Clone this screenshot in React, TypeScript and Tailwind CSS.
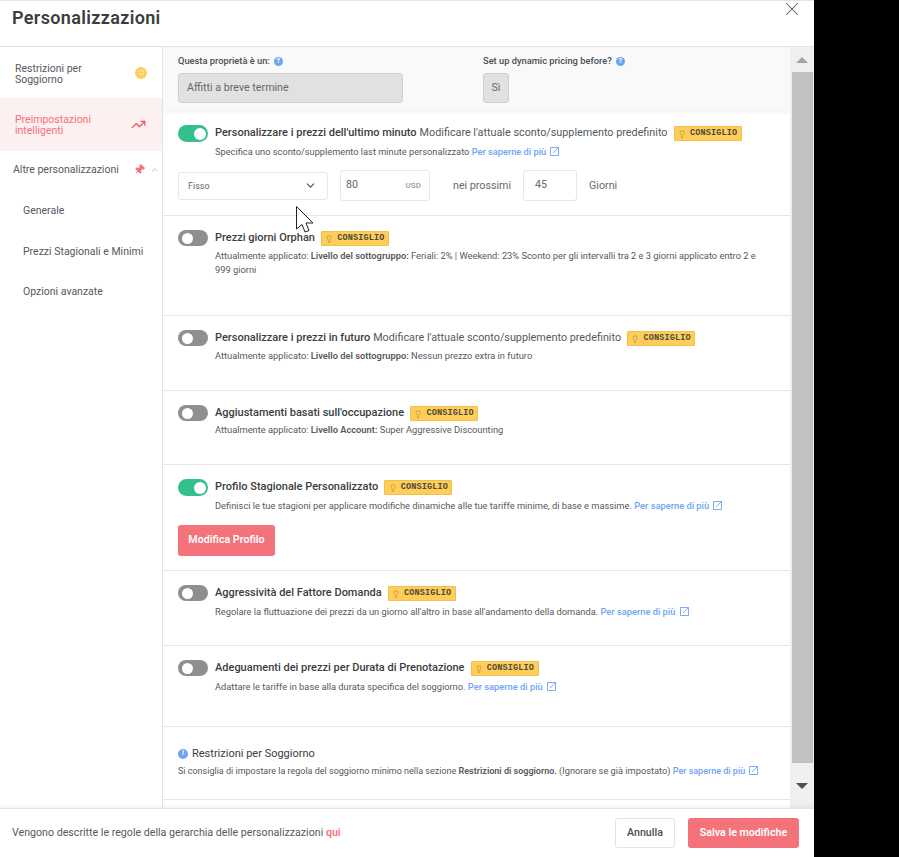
import React from 'react';
import { ChevronDown, ChevronUp, X, Lightbulb, TrendingUp, Pin } from 'lucide-react';

const font = { fontFamily: 'Roboto, sans-serif' };

function Toggle({ on }: { on?: boolean }) {
  return on ? (
    <div className="flex h-[17px] w-[30px] shrink-0 items-center justify-end rounded-full bg-[#33c08d] pr-[2px]">
      <div className="h-[12px] w-[12px] rounded-full bg-white" />
    </div>
  ) : (
    <div className="flex h-[16px] w-[30px] shrink-0 items-center rounded-full bg-[#8f8f8f] pl-[4px]">
      <div className="h-[11px] w-[11px] rounded-full bg-white" />
    </div>
  );
}

function Tip() {
  return (
    <span className="ml-[3px] inline-flex h-[15px] w-[68px] shrink-0 items-center justify-center gap-[4px] rounded-[1px] border border-[#f0c04e] bg-[#ffce5a] font-['Liberation_Mono'] text-[8.5px] font-bold leading-none tracking-[0.15px] text-[#4a4a3a]">
      <Lightbulb size={8} strokeWidth={1.3} className="text-[#7a6a30]" />
      CONSIGLIO
    </span>
  );
}

function LinkIcon() {
  return (
    <svg width="9" height="9" viewBox="0 0 9 9" fill="none" stroke="currentColor" strokeWidth="0.9" className="ml-[2px] inline align-[-1px]">
      <path d="M6 .5H.5v8h8V3" />
      <path d="M3 6L8.5.5M6 .5h2.5V3" />
    </svg>
  );
}

function More() {
  return (
    <span className="whitespace-nowrap font-medium text-[#6ea4f5]">
      {' '}Per saperne di più{' '}
      <LinkIcon />
    </span>
  );
}

function Title({ title, extra }: { title: string; extra?: string }) {
  return (
    <div className="flex h-[17px] items-center gap-[3px] whitespace-nowrap text-[10.8px] text-[#55595c]">
      <span className="text-[11px] font-medium text-[#3a3d40]">{title}</span>
      {extra && <span>{extra}</span>}
      <Tip />
    </div>
  );
}

function Row({ on, title, extra, h, sub = 'mt-[2px]', children }: { on?: boolean; title: string; extra?: string; h: string; sub?: string; children?: React.ReactNode }) {
  return (
    <div className={`border-b border-[#e6e6e6] px-[15px] pt-[14px] ${h}`}>
      <div className="flex items-start gap-[7px]">
        <Toggle on={on} />
        <div className="min-w-0 flex-1">
          <Title title={title} extra={extra} />
          <div className={`whitespace-nowrap text-[9.3px] leading-[14px] text-[#55595c] ${sub}`}>{children}</div>
        </div>
      </div>
    </div>
  );
}

export default function App() {
  return (
    <div style={font} className="relative h-[857px] w-[899px] overflow-hidden bg-black">
      <div className="flex h-[857px] w-[814px] flex-col bg-white">
        <div className="relative h-[47px] shrink-0 border-t border-b border-t-[#e3e5e8] border-b-[#e3e3e3] pl-[12px] pt-[5px]">
          <h1 className="text-[18px] font-semibold leading-[24px] tracking-[0.35px] text-[#3a3d40]">Personalizzazioni</h1>
          <X size={22} strokeWidth={1.1} className="absolute right-[11px] top-[-3px] text-[#55595c]" />
        </div>

        <div className="flex min-h-0 flex-1">
          <aside className="w-[163px] shrink-0 border-r border-[#e3e3e3] text-[10.5px] leading-[11px] text-[#55595c]">
            <div className="flex h-[51px] items-center justify-between pl-[15px] pr-[15px]">
              <span className="mt-[2px]">Restrizioni per<br />Soggiorno</span>
              <div className="flex h-[12px] w-[12px] items-center justify-center rounded-full bg-[#ffce5a]">
                <div className="h-[5px] w-[5px] rounded-full border border-dotted border-white" />
              </div>
            </div>
            <div className="flex h-[53px] items-center justify-between bg-[#fdf0f0] pl-[15px] pr-[16px] text-[#f4727a]">
              <span>Preimpostazioni<br />intelligenti</span>
              <TrendingUp size={15} strokeWidth={2} className="text-[#f0525c]" />
            </div>
            <div className="flex h-[37px] items-center justify-between pl-[13px] pr-[2px]">
              <span>Altre personalizzazioni</span>
              <div className="flex items-center gap-[5px]">
                <Pin size={11} className="rotate-45 fill-[#f4727a] text-[#f4727a]" />
                <ChevronUp size={10} className="text-[#b5b5b5]" />
              </div>
            </div>
            <div className="flex h-[44px] items-center pl-[23px]">Generale</div>
            <div className="flex h-[39px] items-center pl-[23px]">Prezzi Stagionali e Minimi</div>
            <div className="flex h-[40px] items-center pl-[23px]">Opzioni avanzate</div>
          </aside>

          <main className="flex min-w-0 flex-1">
            <div className="min-w-0 flex-1 overflow-hidden">
              <div className="flex h-[64px] gap-[80px] bg-[#f9f9f9] pl-[15px] pt-[7px] shadow-[0_1px_4px_rgba(0,0,0,0.08)]">
                <div className="w-[225px]">
                  <div className="flex items-center gap-[4px] text-[9.3px] font-medium leading-[14px] text-[#4a4d50]">
                    Questa proprietà è un:
                    <span className="flex h-[9px] w-[9px] items-center justify-center rounded-full bg-[#6ea4f5] text-[7px] font-bold text-white">?</span>
                  </div>
                  <div className="mt-[5px] flex h-[30px] items-center rounded-[3px] border border-[#cfcfcf] bg-[#e0e1e0] pl-[8px] text-[10.7px] text-[#66696b]">Affitti a breve termine</div>
                </div>
                <div>
                  <div className="flex items-center gap-[4px] text-[9.3px] font-medium leading-[14px] text-[#4a4d50]">
                    Set up dynamic pricing before?
                    <span className="flex h-[9px] w-[9px] items-center justify-center rounded-full bg-[#6ea4f5] text-[7px] font-bold text-white">?</span>
                  </div>
                  <div className="mt-[5px] flex h-[30px] w-[26px] items-center justify-center rounded-[3px] border border-[#cfcfcf] bg-[#e0e1e0] text-[10.7px] text-[#66696b]">Sì</div>
                </div>
              </div>

              <div className="h-[105px] border-b border-[#e6e6e6] px-[15px] pt-[14px]">
                <div className="flex items-start gap-[7px]">
                  <Toggle on />
                  <div>
                    <Title title="Personalizzare i prezzi dell'ultimo minuto" extra="Modificare l'attuale sconto/supplemento predefinito" />
                    <div className="mt-[3px] text-[9.25px] leading-[14px] text-[#55595c]">Specifica uno sconto/supplemento last minute personalizzato<More /></div>
                  </div>
                </div>
                <div className="mt-[11px] flex items-center text-[10.7px] text-[#66696b]">
                  <div className="flex h-[28px] w-[150px] items-center justify-between rounded-[3px] border border-[#e6e6e6] pl-[9px] pr-[10px] text-[9px]">
                    <span className="mt-[2px]">Fisso</span>
                    <ChevronDown size={13} className="text-[#4a4d50]" />
                  </div>
                  <div className="ml-[12px] flex h-[31px] w-[90px] items-center justify-between rounded-[3px] border border-[#e6e6e6] pl-[5px] pr-[8px]">
                    <span className="-mt-[1px]">80</span>
                    <span className="text-[8px] font-bold text-[#a8a8a8]">USD</span>
                  </div>
                  <span className="ml-[23px] mt-[1px]">nei prossimi</span>
                  <div className="ml-[12px] flex h-[31px] w-[54px] items-center rounded-[3px] border border-[#e6e6e6] pl-[11px]">
                    <span className="-mt-[1px]">45</span>
                  </div>
                  <span className="ml-[12px] mt-[1px]">Giorni</span>
                </div>
              </div>

              <Row title="Prezzi giorni Orphan" h="h-[100px]">
                Attualmente applicato: <span className="font-semibold">Livello del sottogruppo:</span> Feriali: 2% | Weekend: 23% Sconto per gli intervalli tra 2 e 3 giorni applicato entro 2 e<br />999 giorni
              </Row>
              <Row title="Personalizzare i prezzi in futuro" extra="Modificare l'attuale sconto/supplemento predefinito" h="h-[75px]">
                Attualmente applicato: <span className="font-semibold">Livello del sottogruppo:</span> Nessun prezzo extra in futuro
              </Row>
              <Row title="Aggiustamenti basati sull'occupazione" h="h-[74px]" sub="mt-[1px]">
                Attualmente applicato: <span className="font-semibold">Livello Account:</span> Super Aggressive Discounting
              </Row>

              <div className="h-[106px] border-b border-[#e6e6e6] px-[15px] pt-[14px]">
                <div className="flex items-start gap-[7px]">
                  <Toggle on />
                  <div>
                    <Title title="Profilo Stagionale Personalizzato" />
                    <div className="mt-[3px] text-[9.3px] leading-[14px] text-[#55595c]">Definisci le tue stagioni per applicare modifiche dinamiche alle tue tariffe minime, di base e massime.<More /></div>
                  </div>
                </div>
                <button className="mt-[12px] h-[31px] w-[97px] rounded-[3px] bg-[#f4727a] text-[10.7px] font-semibold text-white">Modifica Profilo</button>
              </div>

              <Row title="Aggressività del Fattore Domanda" h="h-[75px]" sub="mt-[3px]">
                Regolare la fluttuazione dei prezzi da un giorno all'altro in base all'andamento della domanda.<More />
              </Row>
              <Row title="Adeguamenti dei prezzi per Durata di Prenotazione" h="h-[81px]" sub="mt-[3px]">
                Adattare le tariffe in base alla durata specifica del soggiorno.<More />
              </Row>

              <div className="h-[73px] border-b border-[#e6e6e6] px-[15px] pt-[18px]">
                <div className="flex items-center gap-[4px] text-[11px] leading-[17px] text-[#3a3d40]">
                  <span className="flex h-[10px] w-[10px] items-center justify-center rounded-full bg-[#6ea4f5] text-[7px] font-bold text-white">!</span>
                  Restrizioni per Soggiorno
                </div>
                <div className="mt-[2px] whitespace-nowrap text-[9px] leading-[14px] text-[#55595c]">
                  Si consiglia di impostare la regola del soggiorno minimo nella sezione <span className="font-semibold">Restrizioni di soggiorno.</span> <span className="text-[9.25px]">(Ignorare se già impostato)</span><More />
                </div>
              </div>
            </div>

            <div className="flex w-[24px] shrink-0 flex-col items-center bg-[#f0f0f0]">
              <div className="flex h-[25px] items-center justify-center">
                <div className="h-0 w-0 border-x-[6px] border-b-[6px] border-x-transparent border-b-[#a3a3a3]" />
              </div>
              <div className="h-[691px] w-[21px] bg-[#c1c1c1]" />
              <div className="flex flex-1 items-center justify-center">
                <div className="h-0 w-0 border-x-[6px] border-t-[6px] border-x-transparent border-t-[#505050]" />
              </div>
            </div>
          </main>
        </div>

        <footer className="z-10 flex h-[49px] shrink-0 items-center justify-between border-t border-[#e3e3e3] pl-[12px] pr-[15px] shadow-[0_-2px_4px_rgba(0,0,0,0.06)]">
          <span className="text-[10.65px] text-[#55595c]">Vengono descritte le regole della gerarchia delle personalizzazioni <span className="font-semibold text-[#f4727a]">qui</span></span>
          <div className="flex items-center gap-[13px]">
            <button className="h-[30px] w-[60px] rounded-[3px] border border-[#e3e3e3] bg-white text-[10.65px] font-medium text-[#4a4d50]">Annulla</button>
            <button className="h-[30px] w-[111px] rounded-[3px] bg-[#f4727a] text-[10.65px] font-semibold text-white">Salva le modifiche</button>
          </div>
        </footer>
      </div>

      <svg className="absolute left-[295px] top-[205px]" width="20" height="29" viewBox="0 0 20 29">
        <path d="M1.5 1.5 L1.5 24 L7 19.5 L10 27 L14 25.5 L11 18 L18 18 Z" fill="#fff" stroke="#222" strokeWidth="1" />
      </svg>
    </div>
  );
}
